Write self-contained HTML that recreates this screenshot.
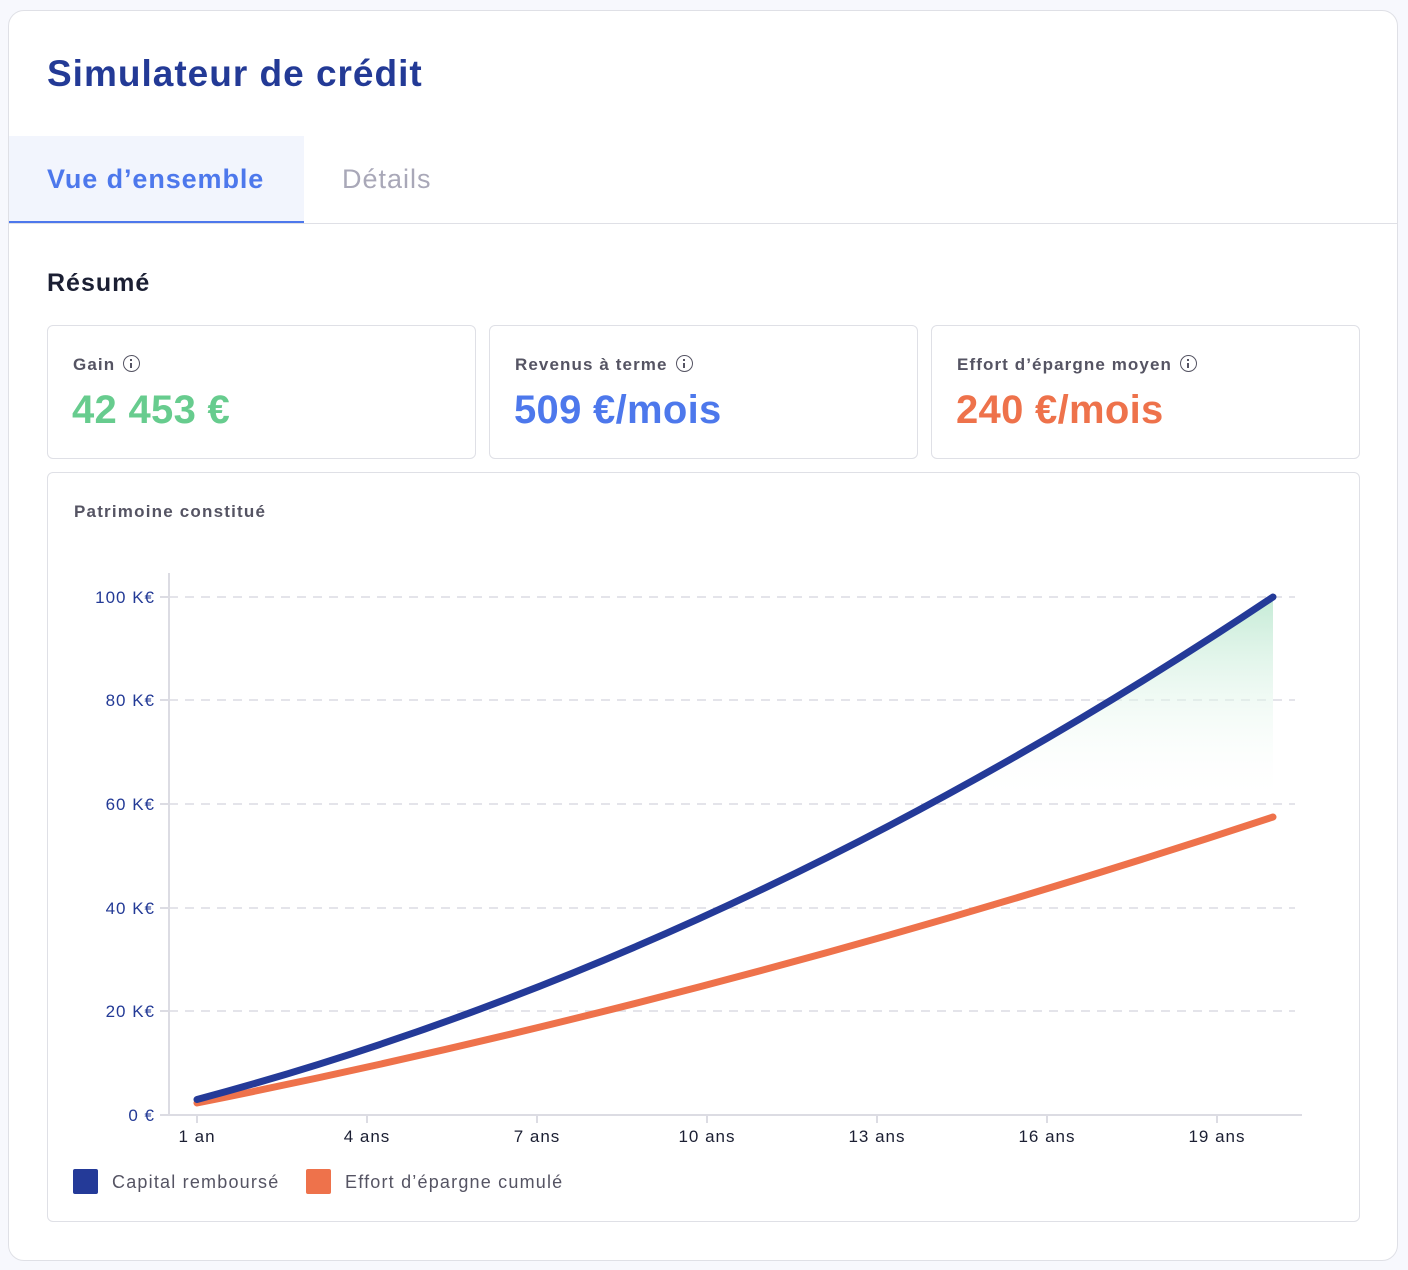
<!DOCTYPE html>
<html><head><meta charset="utf-8"><style>
*{margin:0;padding:0;box-sizing:border-box}
body{width:1408px;height:1270px;background:#f7f8fd;font-family:"Liberation Sans",sans-serif;position:relative;overflow:hidden}
.card{position:absolute;left:8px;top:10px;width:1390px;height:1251px;background:#fff;border:1px solid #dfe0e6;border-radius:16px;overflow:hidden}
.abs{position:absolute}
h1{position:absolute;left:38px;top:42px;font-size:37px;font-weight:700;color:#233a96;letter-spacing:1px}
.tab1{position:absolute;left:-1px;top:125px;width:296px;height:88px;background:#f2f5fd;border-bottom:3px solid #4d78ec}
.tab1 span{position:absolute;left:39px;top:28px;font-size:27px;font-weight:700;color:#4d78ec;letter-spacing:0.9px}
.tab2{position:absolute;left:333px;top:153px;font-size:27px;color:#a9a8b8;letter-spacing:1px}
.line{position:absolute;left:0;top:212px;width:1390px;height:1px;background:#dfe0e6}
h2{position:absolute;left:38px;top:258px;font-size:25px;font-weight:700;color:#1b1f33;letter-spacing:1px}
.box{position:absolute;top:314px;width:429px;height:134px;border:1px solid #dfe0e6;border-radius:6px}
.box .l{position:absolute;left:25px;top:29px;font-size:17px;font-weight:700;color:#555463;letter-spacing:1.1px}
.box .v{position:absolute;left:24px;top:62px;font-size:40px;font-weight:700;letter-spacing:0.3px}
.i{display:inline-block;width:17px;height:17px;border:1.6px solid #555463;border-radius:50%;vertical-align:-2px;margin-left:8px;position:relative}
.i:before{content:"";position:absolute;left:6px;top:3px;width:2px;height:2px;background:#555463}
.i:after{content:"";position:absolute;left:6px;top:6.5px;width:2px;height:5px;background:#555463}
.chart{position:absolute;left:38px;top:461px;width:1313px;height:750px;border:1px solid #dfe0e6;border-radius:6px}
</style></head><body>
<div class="card">
<h1>Simulateur de crédit</h1>
<div class="tab1"><span>Vue d’ensemble</span></div>
<div class="tab2">Détails</div>
<div class="line"></div>
<h2>Résumé</h2>
<div class="box" style="left:38px"><div class="l">Gain<span class="i"></span></div><div class="v" style="color:#67cc8e">42 453 €</div></div>
<div class="box" style="left:480px"><div class="l">Revenus à terme<span class="i"></span></div><div class="v" style="color:#4d78ec">509 €/mois</div></div>
<div class="box" style="left:922px"><div class="l">Effort d’épargne moyen<span class="i"></span></div><div class="v" style="color:#ee724b">240 €/mois</div></div>
<div class="chart"><div class="abs" style="left:26px;top:29px;font-size:17px;font-weight:700;color:#555463;letter-spacing:1.2px">Patrimoine constitué</div></div>
</div>
<svg class="abs" style="left:0;top:0" width="1408" height="1270">
<defs><linearGradient id="g" x1="0" y1="597" x2="0" y2="804" gradientUnits="userSpaceOnUse"><stop offset="0" stop-color="#c5ebd6"/><stop offset="1" stop-color="#fff" stop-opacity="0"/></linearGradient>
<clipPath id="c"><rect x="0" y="0" width="1408" height="804"/></clipPath></defs>
<g stroke="#dcdce3" stroke-width="1.5" stroke-dasharray="9 7">
<line x1="169" y1="597" x2="1295" y2="597"/><line x1="169" y1="700" x2="1295" y2="700"/><line x1="169" y1="804" x2="1295" y2="804"/><line x1="169" y1="908" x2="1295" y2="908"/><line x1="169" y1="1011" x2="1295" y2="1011"/></g>
<g stroke="#dcdce3" stroke-width="2">
<line x1="169" y1="573" x2="169" y2="1116"/><line x1="160" y1="1115" x2="1302" y2="1115"/>
<line x1="160" y1="597" x2="169" y2="597"/><line x1="160" y1="700" x2="169" y2="700"/><line x1="160" y1="804" x2="169" y2="804"/><line x1="160" y1="908" x2="169" y2="908"/><line x1="160" y1="1011" x2="169" y2="1011"/>
<line x1="197" y1="1115" x2="197" y2="1123"/><line x1="367" y1="1115" x2="367" y2="1123"/><line x1="537" y1="1115" x2="537" y2="1123"/><line x1="707" y1="1115" x2="707" y2="1123"/><line x1="877" y1="1115" x2="877" y2="1123"/><line x1="1047" y1="1115" x2="1047" y2="1123"/><line x1="1217" y1="1115" x2="1217" y2="1123"/></g>
<g font-family="Liberation Sans,sans-serif" font-size="17" fill="#233a96" text-anchor="end" letter-spacing="1">
<text x="155" y="603">100 K€</text><text x="155" y="706">80 K€</text><text x="155" y="810">60 K€</text><text x="155" y="914">40 K€</text><text x="155" y="1017">20 K€</text><text x="155" y="1121">0 €</text></g>
<g font-family="Liberation Sans,sans-serif" font-size="17" fill="#1b1f33" text-anchor="middle" letter-spacing="1">
<text x="197" y="1142">1 an</text><text x="367" y="1142">4 ans</text><text x="537" y="1142">7 ans</text><text x="707" y="1142">10 ans</text><text x="877" y="1142">13 ans</text><text x="1047" y="1142">16 ans</text><text x="1217" y="1142">19 ans</text></g>
<path clip-path="url(#c)" fill="url(#g)" d="M197,1099.5 Q735,956 1273,597 L1273,804 L197,804 Z"/>
<path fill="none" stroke="#ee724b" stroke-width="7" stroke-linecap="round" d="M197,1103 Q735,995 1273,817"/>
<path fill="none" stroke="#243a98" stroke-width="7" stroke-linecap="round" d="M197,1099.5 Q735,956 1273,597"/>
<rect x="73" y="1169" width="25" height="25" rx="2" fill="#243a98"/>
<rect x="306" y="1169" width="25" height="25" rx="2" fill="#ee724b"/>
<g font-family="Liberation Sans,sans-serif" font-size="18" fill="#555463" letter-spacing="1.2"><text x="112" y="1188">Capital remboursé</text><text x="345" y="1188">Effort d’épargne cumulé</text></g>
</svg>
</body></html>
